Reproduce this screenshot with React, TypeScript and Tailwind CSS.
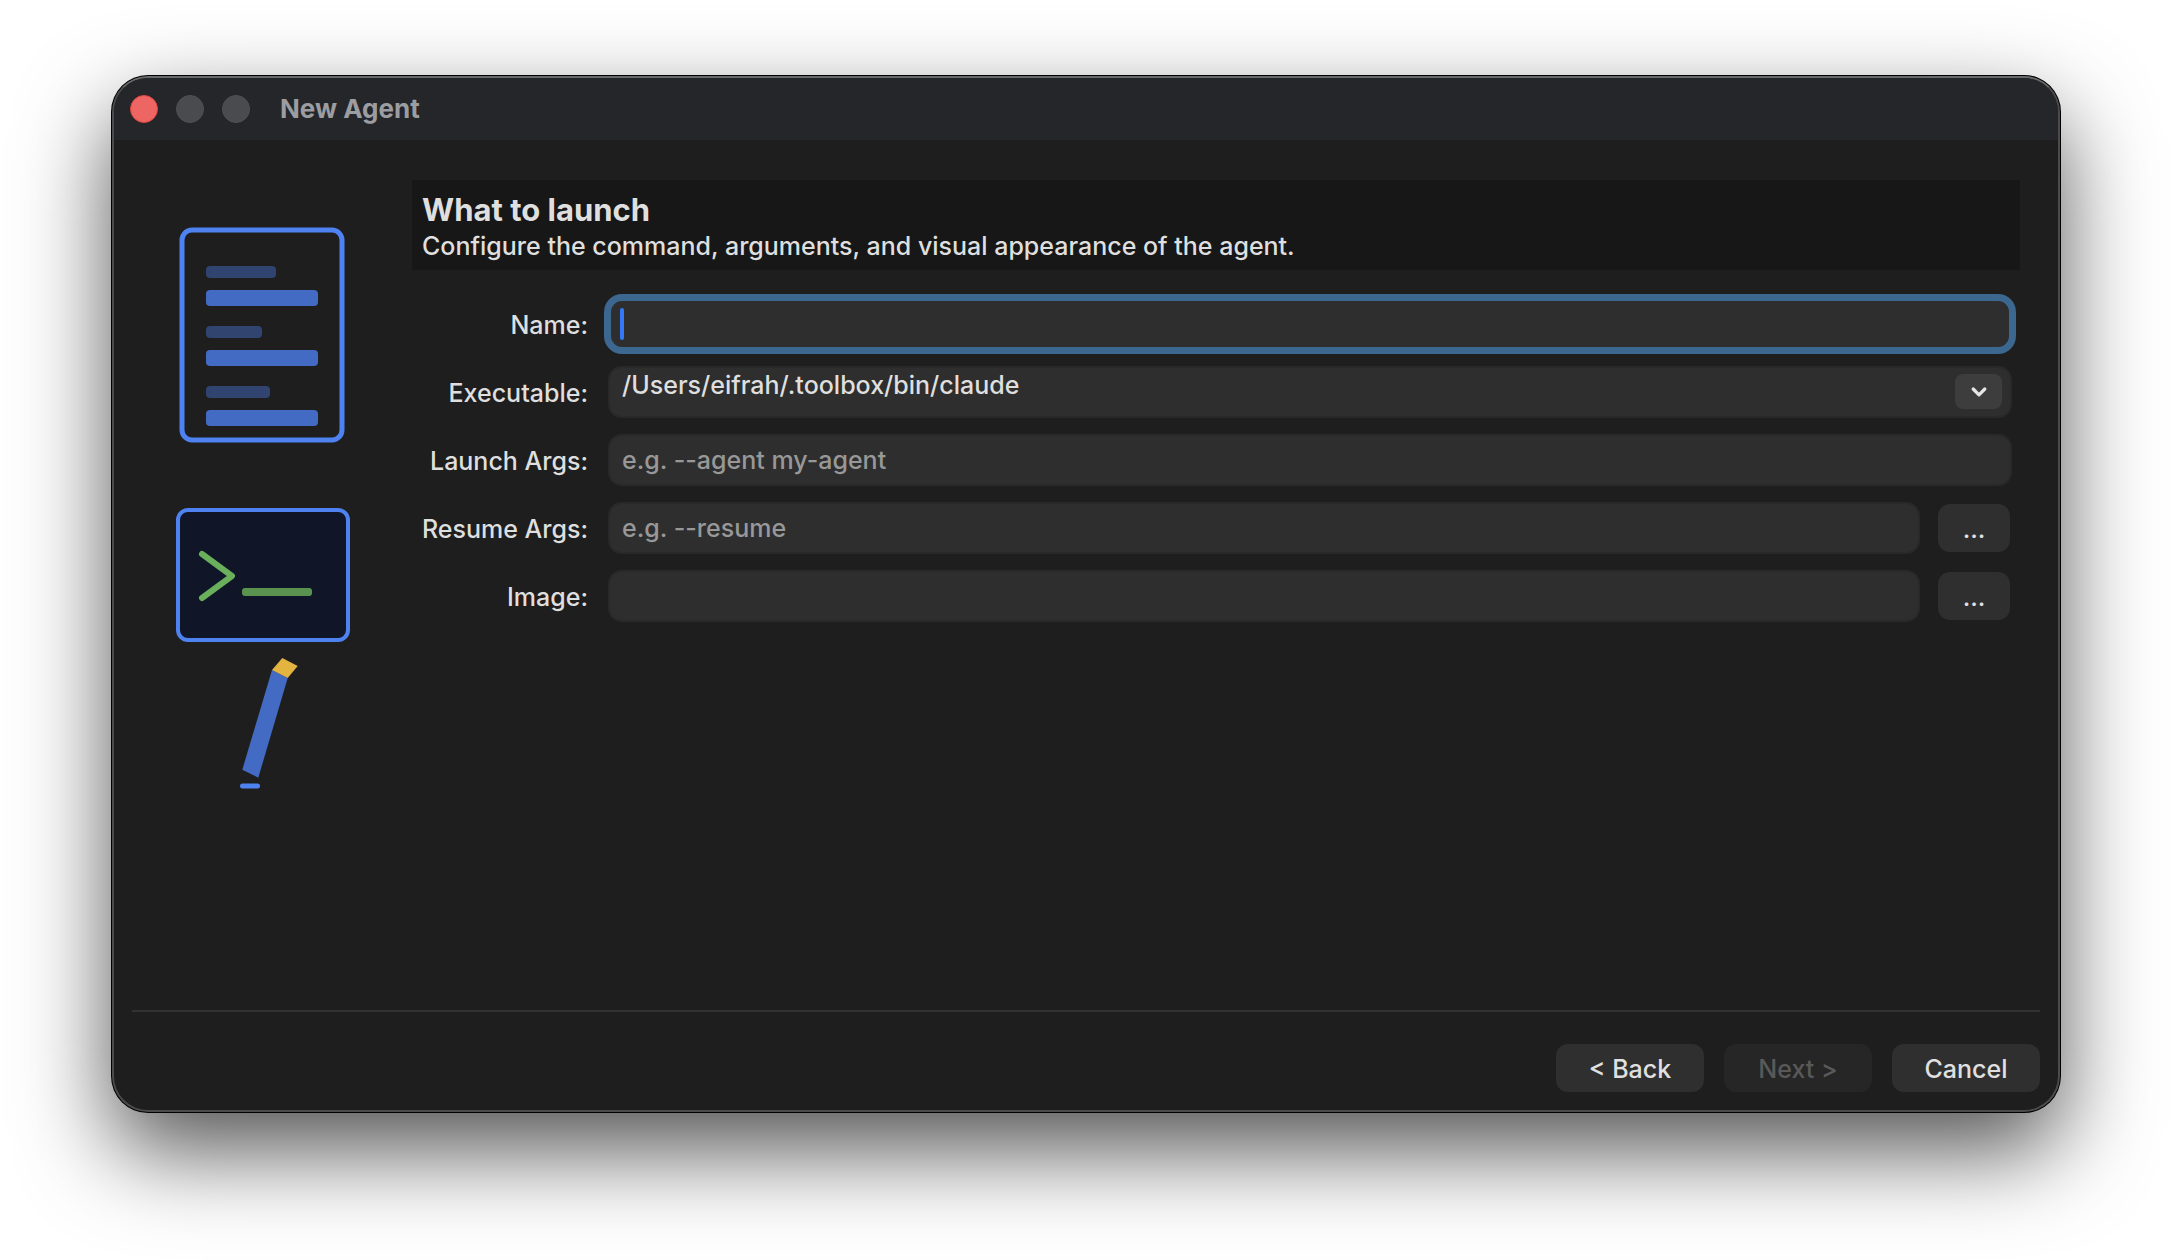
import { useState } from "react";
import type { ReactNode } from "react";

const fieldClass =
  "block h-[52px] w-full min-w-0 rounded-[14px] border-2 border-[#292929] bg-[#2e2e2e] px-3 text-[25px] font-medium text-[#dfdfdf] placeholder:text-[#989898] placeholder:opacity-100 outline-none";

const wizardButtonClass =
  "h-12 w-[148px] rounded-xl bg-[#2f2f2f] pt-0.5 text-[#e0e0e0] disabled:bg-[#262626] disabled:text-[#595959]";

function Row({ id, label, children }: { id: string; label: string; children: ReactNode }) {
  return (
    <div className="grid grid-cols-[176px_minmax(0,1fr)] items-center gap-5">
      <label htmlFor={id} className="pt-0.5 text-right whitespace-nowrap">
        {label}
      </label>
      <div className="flex items-center gap-[18px]">{children}</div>
    </div>
  );
}

function BrowseButton({ label }: { label: string }) {
  return (
    <button
      type="button"
      aria-label={label}
      className="mr-0.5 h-12 w-[72px] shrink-0 rounded-xl bg-[#2f2f2f] pt-0.5 text-[#e0e0e0]"
    >
      ...
    </button>
  );
}

function Illustration() {
  return (
    <svg width="176" height="564" viewBox="176 226 176 564" fill="none" aria-hidden="true">
      {/* document */}
      <rect x="182" y="230" width="160" height="210" rx="10" stroke="#4f82f1" strokeWidth="5" />
      <g fill="#30446f">
        <rect x="206" y="266" width="70" height="12" rx="4" />
        <rect x="206" y="326" width="56" height="12" rx="4" />
        <rect x="206" y="386" width="64" height="12" rx="4" />
      </g>
      <g fill="#436bc4">
        <rect x="206" y="290" width="112" height="16" rx="4" />
        <rect x="206" y="350" width="112" height="16" rx="4" />
        <rect x="206" y="410" width="112" height="16" rx="4" />
      </g>

      {/* terminal */}
      <rect x="178" y="510" width="170" height="130" rx="10" fill="#101628" stroke="#4f82f1" strokeWidth="4" />
      <path d="M202 554 232 576 202 598" stroke="#6aaf5c" strokeWidth="6" strokeLinecap="round" strokeLinejoin="round" />
      <rect x="242" y="588" width="70" height="8" rx="3" fill="#5a924f" />

      {/* pencil */}
      <path d="M272 670 287.7 678 258.3 777.7 242.3 769.7Z" fill="#436bc4" />
      <path d="M282.3 658 297.7 666 287.7 678 272 670Z" fill="#e4b441" />
      <path d="M242.5 786H257.5" stroke="#4f82f1" strokeWidth="5" strokeLinecap="round" />
    </svg>
  );
}

export default function App() {
  const [name, setName] = useState("");

  return (
    <main className="flex min-h-screen flex-col bg-white px-28 pt-[76px] pb-[148px] font-['Inter','Liberation_Sans',sans-serif] text-[25px] leading-8 font-medium text-[#dfdfdf]">
      <div className="flex flex-1 flex-col rounded-[36px] border-2 border-[#4b4b4b] border-t-[#68696b] bg-[#1e1e1e] shadow-[0_0_0_1px_#000,0_38px_92px_rgba(0,0,0,0.68)]">
        {/* title bar */}
        <header className="flex h-[62px] items-center rounded-t-[34px] bg-[#25262a] pl-4">
          <div className="flex gap-[18px]">
            <button type="button" aria-label="Close" className="size-7 rounded-full border border-[#e0443e] bg-[#ee6664]" />
            <button type="button" aria-label="Minimize" disabled className="size-7 rounded-full border border-[#505155] bg-[#4a4b4e]" />
            <button type="button" aria-label="Zoom" disabled className="size-7 rounded-full border border-[#505155] bg-[#4a4b4e]" />
          </div>
          <h1 className="pl-[30px] text-[26px] font-bold text-[#9c9da0]">New Agent</h1>
        </header>

        <form className="flex flex-1 flex-col" onSubmit={(e) => e.preventDefault()}>
          <div className="flex flex-1 pt-10 pr-[38px] pl-[62px]">
            <aside className="w-[236px] shrink-0 pt-[46px]">
              <Illustration />
            </aside>

            <section className="min-w-0 flex-1">
              <div className="h-[90px] bg-[#171717] px-2.5 pt-3">
                <h2 className="text-[31px] leading-9 font-bold">What to launch</h2>
                <p className="pt-0.5">Configure the command, arguments, and visual appearance of the agent.</p>
              </div>

              <div className="flex flex-col gap-4 pt-7 pr-2">
                <Row id="name" label="Name:">
                  <div className="relative w-full">
                    <input
                      id="name"
                      value={name}
                      onChange={(e) => setName(e.target.value)}
                      className="block h-[52px] w-full rounded-[14px] border-3 border-[#3c678f] bg-[#2e2e2e] px-3 text-[25px] caret-[#3478f7] shadow-[0_0_0_4px_#3c678f] outline-none"
                    />
                    {name === "" && (
                      <span className="pointer-events-none absolute top-2.5 left-3 h-8 w-1 rounded-xs bg-[#3478f7]" />
                    )}
                  </div>
                </Row>

                <Row id="executable" label="Executable:">
                  <div className="relative w-full">
                    <select id="executable" className={`${fieldClass} appearance-none pb-3.5`}>
                      <option>/Users/eifrah/.toolbox/bin/claude</option>
                    </select>
                    <span className="pointer-events-none absolute top-2 right-2.5 flex h-[35px] w-[47px] items-center justify-center rounded-lg bg-[#3d3d3d]">
                      <svg width="18" height="12" viewBox="0 0 18 12" fill="none" aria-hidden="true">
                        <path d="M3.2 3 9 8.8 14.8 3" stroke="#e6e6e6" strokeWidth="3.2" strokeLinecap="round" strokeLinejoin="round" />
                      </svg>
                    </span>
                  </div>
                </Row>

                <Row id="launch-args" label="Launch Args:">
                  <input id="launch-args" placeholder="e.g. --agent my-agent" className={fieldClass} />
                </Row>

                <Row id="resume-args" label="Resume Args:">
                  <input id="resume-args" placeholder="e.g. --resume" className={fieldClass} />
                  <BrowseButton label="Browse resume args" />
                </Row>

                <Row id="image" label="Image:">
                  <input id="image" className={fieldClass} />
                  <BrowseButton label="Browse image" />
                </Row>
              </div>
            </section>
          </div>

          {/* wizard buttons */}
          <footer className="mx-[18px] flex justify-end gap-5 border-t-2 border-[#323232] pt-8 pb-[18px]">
            <button type="button" className={wizardButtonClass}>&lt; Back</button>
            <button type="submit" disabled className={wizardButtonClass}>Next &gt;</button>
            <button type="button" className={wizardButtonClass}>Cancel</button>
          </footer>
        </form>
      </div>
    </main>
  );
}
